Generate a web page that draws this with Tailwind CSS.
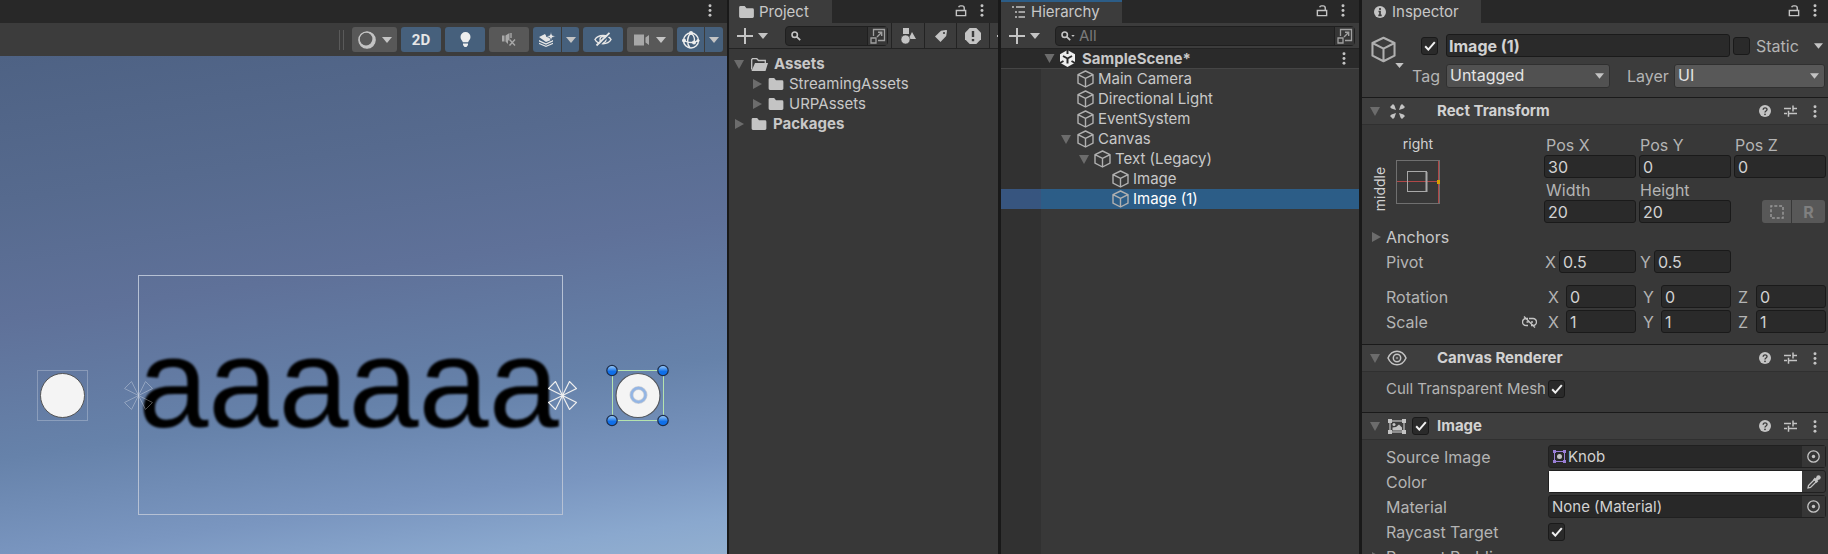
<!DOCTYPE html>
<html lang="en">
<head>
  <meta charset="UTF-8" />
  <meta name="viewport" content="width=device-width, initial-scale=1" />
  <title>SampleScene - Unity Editor</title>
  <script src="https://cdn.jsdelivr.net/npm/@tailwindcss/browser@4"></script>
</head>
<body class="bg-[#191919] font-['Inter',sans-serif] text-[15px] leading-5 text-[#c8c8c8]">

  <!-- Icon sprite -->
  <svg class="hidden" aria-hidden="true">
    <symbol id="dots" viewBox="0 0 4 14"><g fill="#c4c4c4"><circle cx="2" cy="2" r="1.6"/><circle cx="2" cy="7" r="1.6"/><circle cx="2" cy="12" r="1.6"/></g></symbol>
    <symbol id="lock" viewBox="0 0 12 14"><path d="M1 7h10v5.5H1zM9.500 7V4.200A2.300 2.300 0 0 0 7.200 2H5.500A2 2 0 0 0 3.500 3.500" fill="none" stroke="#c4c4c4" stroke-width="1.500"/></symbol>
    <symbol id="caret" viewBox="0 0 10 6"><path d="M0 0h10L5 6z" fill="#c4c4c4"/></symbol>
    <symbol id="fold-open" viewBox="0 0 10 9"><path d="M0 0h10L5 9z" fill="#6c6c6c"/></symbol>
    <symbol id="fold-closed" viewBox="0 0 9 10"><path d="M0 0v10l9-5z" fill="#6c6c6c"/></symbol>
    <symbol id="plus" viewBox="0 0 16 16"><path d="M8 0v16M0 8h16" stroke="#c4c4c4" stroke-width="2"/></symbol>
    <symbol id="folder" viewBox="0 0 16 13"><path d="M0 1.500A1.500 1.500 0 0 1 1.500 0H6l2 2.500h6.500A1.500 1.500 0 0 1 16 4v7.500a1.500 1.500 0 0 1-1.500 1.500h-13A1.500 1.500 0 0 1 0 11.500z" fill="#c4c4c4"/></symbol>
    <symbol id="folder-open" viewBox="0 0 17 13"><path d="M.7 11.500V1.500L1.500.7h4.300L7.500 2.500h6.800V5" fill="none" stroke="#c4c4c4" stroke-width="1.300"/><path d="M4 5h13l-2.500 8H.5z" fill="#c4c4c4"/></symbol>
    <symbol id="search" viewBox="0 0 10 10"><circle cx="3.700" cy="3.700" r="2.700" fill="none" stroke="#c4c4c4" stroke-width="1.600"/><path d="M5.600 5.600 9.200 9.200" stroke="#c4c4c4" stroke-width="1.800"/></symbol>
    <symbol id="popout" viewBox="0 0 16 16"><path d="M3.500 8V1.500h11v11H8" fill="none" stroke="#a0a0a0" stroke-width="1.300"/><path d="M1 10h5v5H1z" fill="none" stroke="#a0a0a0" stroke-width="1.300"/><path d="M7 9 11.500 4.500M8 4.300h3.700V8" fill="none" stroke="#a0a0a0" stroke-width="1.400"/></symbol>
    <symbol id="cube" viewBox="0 0 17 18"><path d="M8.500 1 16 4.600v8.600L8.500 17 1 13.200V4.600zM1 4.600l7.500 3.800L16 4.600M8.500 8.400V17" fill="none" stroke="#b0b0b0" stroke-width="1.400" stroke-linejoin="round"/></symbol>
    <symbol id="help" viewBox="0 0 12 12"><circle cx="6" cy="6" r="6" fill="#c4c4c4"/><path d="M4.200 4.700C4.200 2.300 8 2.300 8 4.600 8 6 6 6 6 7.400" fill="none" stroke="#3e3e3e" stroke-width="1.400"/><circle cx="6" cy="9.300" r=".9" fill="#3e3e3e"/></symbol>
    <symbol id="preset" viewBox="0 0 13 12"><path d="M0 3.500h7M9 3.500h4M9 .5v6M0 8.500h3M5 8.500h8M4.500 5.800v6" stroke="#c4c4c4" stroke-width="1.500"/></symbol>
    <symbol id="check" viewBox="0 0 12 10"><path d="M1.200 5.300 4.300 8.600 10.800 1.200" fill="none" stroke="#f0f0f0" stroke-width="2"/></symbol>
    <symbol id="target" viewBox="0 0 13 13"><circle cx="6.500" cy="6.500" r="5.700" fill="none" stroke="#c4c4c4" stroke-width="1.300"/><circle cx="6.500" cy="6.500" r="1.700" fill="#c4c4c4"/></symbol>
  </svg>

  <div class="flex h-screen gap-[3px] overflow-hidden">

    <!-- Scene view -->
    <section class="-mr-px flex min-w-0 flex-1 flex-col">
      <div class="flex h-[23px] shrink-0 items-center justify-end bg-[#282828] pr-[15px] pb-[3px]">
        <button aria-label="Scene menu"><svg class="h-[13px] w-1"><use href="#dots"/></svg></button>
      </div>
      <div class="flex h-[33px] shrink-0 items-center justify-end gap-1 bg-[#3c3c3c] pr-1">
        <span class="mr-1 h-5 w-[5px] border-x border-[#5a5a5a]"></span>
        <button class="flex h-[25px] w-[45px] items-center justify-center gap-[6px] rounded-[3px] bg-[#585858]" aria-label="Draw mode">
          <svg class="h-[18px] w-[18px]" viewBox="0 0 18 18"><circle cx="9" cy="9" r="8.200" fill="#c4c4c4"/><circle cx="8" cy="8" r="6.400" fill="#585858"/><circle cx="9" cy="9" r="8.200" fill="none" stroke="#c4c4c4" stroke-width="1.200"/></svg>
          <svg class="h-[6px] w-[10px]"><use href="#caret"/></svg>
        </button>
        <button class="h-[25px] w-10 rounded-[3px] bg-[#46607c] font-['Roboto',sans-serif] text-[15px] font-bold text-[#e6e6e6]">2D</button>
        <button class="flex h-[25px] w-10 items-center justify-center rounded-[3px] bg-[#46607c]" aria-label="Lighting">
          <svg class="h-[15px] w-[11px]" viewBox="0 0 11 15"><path d="M5.500 0a5 5 0 0 1 5 5c0 2.500-2 3.500-2.300 5.300H2.800C2.500 8.500.5 7.500.5 5a5 5 0 0 1 5-5zM3 11.500h5v1.500L6.500 15h-2L3 13z" fill="#eee"/></svg>
        </button>
        <button class="flex h-[25px] w-10 items-center justify-center rounded-[3px] bg-[#585858]" aria-label="Audio">
          <svg class="h-[13px] w-[14px]" viewBox="0 0 14 13"><path d="M0 2.500h2.500v6H0zM3.500 2.500 7.500 0v6L6 8v3L3.500 8.500z" fill="#a8a8a8"/><path d="M9 0v5M7.500 6.500l5.500 6M13 6.500l-5.500 6" stroke="#a8a8a8" stroke-width="1.400"/></svg>
        </button>
        <div class="flex gap-px">
          <button class="flex h-[25px] w-7 items-center justify-center rounded-l-[3px] bg-[#46607c]" aria-label="Effects">
            <svg class="h-[15px] w-[17px]" viewBox="0 0 17 15"><path d="M0 5 6 2l1.500 2.500 3 1L12 8l-5 2zM0 8l7 3.200L14 8v1.500l-7 3.200L0 9.500zM0 10.700l7 3 7-3V12l-7 3-7-3z" fill="#e6e6e6"/><path d="M12 0l1.200 3.200 3.500 1.200-3.500 1.200L12 8.800l-1.200-3.200-3.500-1.200 3.500-1.200z" fill="#e6e6e6" stroke="#46607c" stroke-width=".7"/></svg>
          </button>
          <button class="flex h-[25px] w-[17px] items-center justify-center rounded-r-[3px] bg-[#46607c]" aria-label="Effects options"><svg class="h-[6px] w-[10px]"><use href="#caret"/></svg></button>
        </div>
        <button class="flex h-[25px] w-10 items-center justify-center rounded-[3px] bg-[#46607c]" aria-label="Scene visibility">
          <svg class="h-[15px] w-[18px]" viewBox="0 0 18 15"><path d="M1 7.500C4 2 14 2 17 7.500 14 13 4 13 1 7.500z" fill="none" stroke="#e6e6e6" stroke-width="1.500"/><circle cx="9" cy="7.500" r="3" fill="none" stroke="#e6e6e6" stroke-width="1.300"/><path d="M4 14.500 16.500 2" stroke="#46607c" stroke-width="1.500"/><path d="M2.500 13.500 15.500 .8" stroke="#e6e6e6" stroke-width="1.800"/></svg>
        </button>
        <button class="flex h-[25px] w-[46px] items-center justify-center gap-[6px] rounded-[3px] bg-[#585858]" aria-label="Camera">
          <svg class="h-[12px] w-[16px]" viewBox="0 0 16 12"><path d="M0 .5h10v11H0zM11.500 3.500 15 1v10l-3.500-2.500z" fill="#a8a8a8"/></svg>
          <svg class="h-[6px] w-[10px]"><use href="#caret"/></svg>
        </button>
        <div class="flex gap-px">
          <button class="flex h-[25px] w-[27px] items-center justify-center rounded-l-[3px] bg-[#46607c]" aria-label="Gizmos">
            <svg class="h-[18px] w-[18px]" viewBox="0 0 18 18"><g fill="none" stroke="#eee" stroke-width="1.400"><circle cx="9" cy="9.500" r="7.500"/><path d="M9 2C5 5 4.500 13 8 17M9 2c3.500 3 4 7 3 10M2 9.500c3.500 2.500 10.500 3 14 0"/></g><g fill="#eee"><circle cx="9" cy="2" r="2"/><circle cx="2" cy="9.500" r="2"/><circle cx="12" cy="11.500" r="2"/><circle cx="16" cy="9.500" r="1.500"/></g></svg>
          </button>
          <button class="flex h-[25px] w-[18px] items-center justify-center rounded-r-[3px] bg-[#46607c]" aria-label="Gizmo options"><svg class="h-[6px] w-[10px]"><use href="#caret"/></svg></button>
        </div>
      </div>

      <!-- Scene canvas -->
      <div class="relative flex-1 overflow-hidden bg-[linear-gradient(172deg,#4e6284_0%,#566a8e_24%,#5f7199_44%,#6682aa_67%,#7a96c0_84%,#8aa8ce_94%,#92afd0_100%)]">
        <div class="absolute top-[219px] left-[138px] flex h-[240px] w-[425px] items-center justify-center border border-[#b6c1d4] pr-1 pb-[22px]">
          <span class="font-['Liberation_Sans',sans-serif] text-[126px] leading-none text-black blur-[1px]">aaaaaa</span>
        </div>
        <div class="absolute top-[314px] left-[37px] flex h-[51px] w-[51px] items-center justify-center border border-white/25">
          <span class="h-[45px] w-[45px] rounded-full border border-[#555] bg-[#f4f4f4]"></span>
        </div>
        <svg class="absolute top-[325px] left-[124px] h-[29px] w-[29px] opacity-30" viewBox="0 0 29 29"><path d="M14.500 14.500 7.500.5.5 7.500zM14.500 14.500l7-14 7 7zM14.500 14.500l14 7-7 7zM14.500 14.500l-7 14-7-7z" fill="none" stroke="#fff"/></svg>
        <svg class="absolute top-[325px] left-[548px] h-[29px] w-[29px]" viewBox="0 0 29 29"><path d="M14.500 14.500 7.500.5.5 7.500zM14.500 14.500l7-14 7 7zM14.500 14.500l14 7-7 7zM14.500 14.500l-7 14-7-7z" fill="none" stroke="#eee" stroke-width="1.200"/></svg>
        <svg class="absolute top-[308px] left-[606px] h-[63px] w-[63px]" viewBox="0 0 63 63">
          <defs><linearGradient id="handle" x2="0" y2="1"><stop offset=".1" stop-color="#8fc0f4"/><stop offset=".6" stop-color="#0f6fe8"/></linearGradient></defs>
          <rect x="6.500" y="6.500" width="51" height="50" fill="none" stroke="#b5e3ae"/>
          <circle cx="32" cy="31.500" r="22" fill="#f4f4f4" stroke="#55595f" stroke-width="1.200"/>
          <circle cx="32.500" cy="31" r="7" fill="none" stroke="#c9ced6" stroke-width="4"/>
          <circle cx="32.500" cy="31" r="7" fill="none" stroke="#93b5e4" stroke-width="2.500"/>
          <g fill="url(#handle)" stroke="#1d2c48" stroke-width="1.200"><circle cx="6" cy="6.500" r="5.200"/><circle cx="57" cy="6.500" r="5.200"/><circle cx="6" cy="56.500" r="5.200"/><circle cx="57" cy="56.500" r="5.200"/></g>
        </svg>
      </div>
    </section>

    <!-- Project -->
    <section class="flex w-[269px] shrink-0 flex-col bg-[#383838]">
      <div class="flex h-[23px] items-center bg-[#282828]">
        <h2 class="flex h-[23px] w-[103px] items-center gap-[5px] bg-[#3c3c3c] pl-[10px]">
          <svg class="h-3 w-[15px]"><use href="#folder"/></svg>Project
        </h2>
        <button class="ml-auto pb-[3px]" aria-label="Lock"><svg class="h-[13px] w-3"><use href="#lock"/></svg></button>
        <button class="mr-[14px] ml-[13px] pb-[3px]" aria-label="Project menu"><svg class="h-[13px] w-1"><use href="#dots"/></svg></button>
      </div>
      <div class="flex h-[26px] items-center border-b border-[#232323] bg-[#3c3c3c] pl-2">
        <button class="flex items-center gap-[5px]" aria-label="Create"><svg class="h-4 w-4"><use href="#plus"/></svg><svg class="h-[6px] w-[10px]"><use href="#caret"/></svg></button>
        <label class="ml-[17px] flex h-5 w-[103px] items-center rounded-[4px] border border-[#1f1f1f] bg-[#2a2a2a] pl-[5px]">
          <svg class="h-[10px] w-[10px] shrink-0"><use href="#search"/></svg>
          <input type="search" class="min-w-0 flex-1 outline-none" aria-label="Search project" />
          <span class="flex h-full w-5 items-center justify-center border-l border-[#1f1f1f] bg-[#363636]"><svg class="h-4 w-4"><use href="#popout"/></svg></span>
        </label>
        <div class="ml-[3px] flex h-full flex-1 items-center overflow-hidden">
          <button class="flex h-full w-[33px] shrink-0 items-center justify-center border-l border-[#232323]" aria-label="Search by type"><svg class="h-4 w-[15px]" viewBox="0 0 15 16"><path d="M2 0h6v6H2zM11 4l4 7H7.500z" fill="#c4c4c4"/><circle cx="4.500" cy="11.500" r="4.500" fill="#c4c4c4" stroke="#3c3c3c" stroke-width=".6"/></svg></button>
          <button class="flex h-full w-8 shrink-0 items-center justify-center border-l border-[#232323]" aria-label="Search by label"><svg class="h-3 w-3" viewBox="0 0 12 12"><path d="M0 6.500 6 .8 11 0c.6 0 1 .4 1 1l-.8 5L5.500 12z" fill="#c4c4c4"/><circle cx="9" cy="3" r="1.100" fill="#3c3c3c"/></svg></button>
          <button class="flex h-full w-[33px] shrink-0 items-center justify-center border-l border-[#232323]" aria-label="Search by log"><svg class="h-4 w-4" viewBox="0 0 16 16"><path d="M4.700 0h6.600L16 4.700v6.600L11.300 16H4.700L0 11.300V4.700z" fill="#c4c4c4"/><path d="M8 3v6M8 11v2.200" stroke="#3c3c3c" stroke-width="2.400"/></svg></button>
          <span class="flex h-full flex-1 items-center justify-end border-l border-[#232323]"><span class="h-[2px] w-px bg-[#c4c4c4]"></span></span>
        </div>
      </div>
      <ul class="pt-[5px]">
        <li class="flex h-5 items-center pl-[5px] font-bold"><svg class="h-[9px] w-[10px]"><use href="#fold-open"/></svg><svg class="mr-[6px] ml-[7px] h-[13px] w-[17px]"><use href="#folder-open"/></svg>Assets</li>
        <li class="flex h-5 items-center pl-6"><svg class="h-[10px] w-[9px]"><use href="#fold-closed"/></svg><svg class="mr-[5px] ml-[6px] h-3 w-4"><use href="#folder"/></svg>StreamingAssets</li>
        <li class="flex h-5 items-center pl-6"><svg class="h-[10px] w-[9px]"><use href="#fold-closed"/></svg><svg class="mr-[5px] ml-[6px] h-3 w-4"><use href="#folder"/></svg>URPAssets</li>
        <li class="flex h-5 items-center pl-[6px] font-bold"><svg class="h-[10px] w-[9px]"><use href="#fold-closed"/></svg><svg class="mr-[6px] ml-[7px] h-3 w-4"><use href="#folder"/></svg>Packages</li>
      </ul>
    </section>

    <!-- Hierarchy -->
    <section class="flex w-[358px] shrink-0 flex-col bg-[#383838]">
      <div class="flex h-[23px] items-center bg-[#282828]">
        <h2 class="flex h-[23px] w-[121px] items-center gap-[6px] border-t-2 border-[#2c5d87] bg-[#3c3c3c] pb-[1px] pl-[11px]">
          <svg class="h-3 w-[13px]" viewBox="0 0 13 12"><path d="M0 1h2M4 1h9M3 6h2M6.500 6H13M3 11h2M6.500 11H13" stroke="#c4c4c4" stroke-width="1.300"/></svg>Hierarchy
        </h2>
        <button class="ml-auto pb-[3px]" aria-label="Lock"><svg class="h-[13px] w-3"><use href="#lock"/></svg></button>
        <button class="mr-[14px] ml-[13px] pb-[3px]" aria-label="Hierarchy menu"><svg class="h-[13px] w-1"><use href="#dots"/></svg></button>
      </div>
      <div class="flex h-[26px] items-center border-b border-[#232323] bg-[#3c3c3c] pr-1 pl-2">
        <button class="flex items-center gap-[5px]" aria-label="Create"><svg class="h-4 w-4"><use href="#plus"/></svg><svg class="h-[6px] w-[10px]"><use href="#caret"/></svg></button>
        <label class="ml-[15px] flex h-5 flex-1 items-center rounded-[4px] border border-[#1f1f1f] bg-[#2a2a2a] pl-[5px]">
          <svg class="h-[10px] w-[10px] shrink-0"><use href="#search"/></svg><svg class="h-[2px] w-1"><use href="#caret"/></svg>
          <input type="search" placeholder="All" class="ml-1 min-w-0 flex-1 outline-none placeholder:text-[#7a7a7a]" aria-label="Search hierarchy" />
          <span class="flex h-full w-5 items-center justify-center border-l border-[#1f1f1f] bg-[#363636]"><svg class="h-4 w-4"><use href="#popout"/></svg></span>
        </label>
      </div>
      <div class="flex h-5 items-center border-b border-[#454545] bg-[#2a2a2a] pr-[13px] pl-[43px] font-bold">
        <svg class="h-[9px] w-[11px]"><use href="#fold-open"/></svg>
        <svg class="mr-[6px] ml-1 h-[17px] w-[17px]" viewBox="0 0 17 17"><path d="M8.500 0 16 4.200v8.600L8.500 17 1 12.800V4.200z" fill="#eee"/><path d="M8.500 8.500v5M8.500 8.500 4 6M8.500 8.500 13 6" stroke="#2a2a2a" stroke-width="2"/><path d="M8.500 0v4M1 13l3.500-2M16 13l-3.500-2" stroke="#2a2a2a" stroke-width="2"/></svg>
        SampleScene*
        <button class="ml-auto" aria-label="Scene menu"><svg class="h-[13px] w-1"><use href="#dots"/></svg></button>
      </div>
      <ul class="flex-1 bg-linear-to-r from-[#313131] from-[40px] to-[#383838] to-[40px]">
        <li class="flex h-5 items-center gap-1 pl-[76px]"><svg class="h-[18px] w-[17px]"><use href="#cube"/></svg>Main Camera</li>
        <li class="flex h-5 items-center gap-1 pl-[76px]"><svg class="h-[18px] w-[17px]"><use href="#cube"/></svg>Directional Light</li>
        <li class="flex h-5 items-center gap-1 pl-[76px]"><svg class="h-[18px] w-[17px]"><use href="#cube"/></svg>EventSystem</li>
        <li class="flex h-5 items-center gap-1 pl-[60px]"><svg class="mr-[2px] h-[9px] w-[10px]"><use href="#fold-open"/></svg><svg class="h-[18px] w-[17px]"><use href="#cube"/></svg>Canvas</li>
        <li class="flex h-5 items-center gap-1 pl-[78px]"><svg class="mr-px h-[9px] w-[10px]"><use href="#fold-open"/></svg><svg class="h-[18px] w-[17px]"><use href="#cube"/></svg>Text (Legacy)</li>
        <li class="flex h-5 items-center gap-1 pl-[111px]"><svg class="h-[18px] w-[17px]"><use href="#cube"/></svg>Image</li>
        <li class="flex h-5 items-center gap-1 bg-linear-to-r from-[#37557f] from-[40px] to-[#2c5d87] to-[40px] pl-[111px] text-white"><svg class="h-[18px] w-[17px]"><use href="#cube"/></svg>Image (1)</li>
      </ul>
    </section>

    <!-- Inspector -->
    <section class="flex w-[466px] shrink-0 flex-col overflow-hidden bg-[#383838] text-base leading-5">
      <div class="flex h-[23px] shrink-0 items-center bg-[#282828]">
        <h2 class="flex h-[23px] w-[119px] items-center gap-[6px] bg-[#3c3c3c] pl-3 text-[15px]">
          <svg class="h-3 w-3" viewBox="0 0 12 12"><circle cx="6" cy="6" r="6" fill="#c4c4c4"/><path d="M6 2v2M4.500 5.500H6V9M4.300 9.300h3.400" fill="none" stroke="#3c3c3c" stroke-width="1.700"/></svg>Inspector
        </h2>
        <button class="ml-auto pb-[3px]" aria-label="Lock"><svg class="h-[13px] w-3"><use href="#lock"/></svg></button>
        <button class="mr-[11px] ml-[13px] pb-[3px]" aria-label="Inspector menu"><svg class="h-[13px] w-1"><use href="#dots"/></svg></button>
      </div>

      <!-- Object header -->
      <header class="flex h-[74px] shrink-0 bg-[#3c3c3c] pt-[11px] pr-[3px] pl-[9px]">
        <button class="flex w-[37px] flex-col pt-[2px]" aria-label="Object icon">
          <svg class="h-[27px] w-[25px]"><use href="#cube"/></svg>
          <svg class="ml-6 h-[5px] w-[9px]"><use href="#caret"/></svg>
        </button>
        <div class="flex flex-1 flex-col gap-[7px]">
          <div class="flex items-center">
            <span class="ml-[13px] grid h-[18px] w-[17px] place-items-center"><input type="checkbox" checked class="peer col-start-1 row-start-1 h-full w-full appearance-none rounded-[3px] border border-[#1a1a1a] bg-[#2a2a2a]" aria-label="Active" /><svg class="pointer-events-none col-start-1 row-start-1 hidden h-[10px] w-3 peer-checked:block"><use href="#check"/></svg></span>
            <input type="text" value="Image (1)" class="ml-2 h-[23px] min-w-0 flex-1 rounded-[3px] border border-[#1a1a1a] bg-[#2a2a2a] px-[2px] font-bold text-[#d2d2d2]" aria-label="Name" />
            <input type="checkbox" id="static" class="ml-[3px] h-[18px] w-[17px] appearance-none rounded-[3px] border border-[#1a1a1a] bg-[#2a2a2a]" />
            <label for="static" class="ml-[6px] w-[58px] text-[#b4b4b4]">Static</label>
            <svg class="mr-[2px] h-[6px] w-[9px]"><use href="#caret"/></svg>
          </div>
          <div class="flex items-center">
            <label for="tag" class="w-[38px] pl-1 text-[#b4b4b4]">Tag</label>
            <span class="grid h-[23px] w-[164px] items-center"><select id="tag" class="col-start-1 row-start-1 h-full w-full appearance-none rounded-[3px] border border-[#303030] bg-[#515151] px-[3px] pb-[2px] text-[#e4e4e4]"><option>Untagged</option></select><svg class="pointer-events-none col-start-1 row-start-1 mr-[6px] h-[6px] w-[9px] justify-self-end"><use href="#caret"/></svg></span>
            <label for="layer" class="ml-[17px] w-[47px] text-[#b4b4b4]">Layer</label>
            <span class="grid h-[23px] flex-1 items-center"><select id="layer" class="col-start-1 row-start-1 h-full w-full appearance-none rounded-[3px] border border-[#303030] bg-[#585858] px-[3px] pb-[2px] text-[#e4e4e4]"><option>UI</option></select><svg class="pointer-events-none col-start-1 row-start-1 mr-[6px] h-[6px] w-[9px] justify-self-end"><use href="#caret"/></svg></span>
          </div>
        </div>
      </header>

      <!-- Rect Transform -->
      <div class="flex h-7 shrink-0 items-center border-t border-b border-t-[#1a1a1a] border-b-[#303030] bg-[#3e3e3e] pr-[11px] pl-2">
        <svg class="h-[9px] w-[10px]"><use href="#fold-open"/></svg>
        <svg class="ml-[10px] h-[15px] w-[15px]" viewBox="0 0 15 15"><path d="M0 3 3 0 4.500 1.500 6 6 1.500 4.500zM15 3 12 0 10.500 1.500 9 6 13.500 4.500zM0 12 3 15 4.500 13.500 6 9 1.500 10.500zM15 12 12 15 10.500 13.500 9 9 13.500 10.500z" fill="#c4c4c4"/></svg>
        <h3 class="ml-8 flex-1 text-[15px] font-bold text-[#d2d2d2]">Rect Transform</h3>
        <div class="flex items-center gap-[13px]">
          <button aria-label="Help"><svg class="h-3 w-3"><use href="#help"/></svg></button>
          <button aria-label="Presets"><svg class="h-3 w-[13px]"><use href="#preset"/></svg></button>
          <button class="ml-[3px]" aria-label="More"><svg class="h-[13px] w-1"><use href="#dots"/></svg></button>
        </div>
      </div>
      <div class="flex shrink-0 items-start pt-[10px] pr-[2px]">
        <div class="flex w-[182px] pl-2">
          <span class="flex h-[88px] w-5 items-center justify-center pt-5 text-sm leading-5 text-[#d2d2d2]"><span class="-rotate-90">middle</span></span>
          <div class="ml-[6px] flex flex-col items-center text-sm leading-5 text-[#d2d2d2]">
            <span class="-mt-px">right</span>
            <svg class="mt-[6px] h-11 w-11" viewBox="0 0 44 44"><rect x=".5" y=".5" width="43" height="43" fill="none" stroke="#707070"/><path d="M42.500 1v42M1 21.500h42" stroke="#b04848"/><rect x="12" y="12" width="19" height="19" fill="#383838"/><path d="M12 21.500h19" stroke="#b04848"/><rect x="11.500" y="11.500" width="19" height="20" fill="none" stroke="#a8a8a8"/><path d="M30.500 12v20" stroke="#a8a8a8" stroke-width="2"/><path d="M41 20h3v4h-3z" fill="#d8a000"/></svg>
          </div>
        </div>
        <div class="grid flex-1 grid-cols-3 gap-x-[3px]">
          <label for="pos-x" class="pl-[2px] text-[#b4b4b4]">Pos X</label>
          <label for="pos-y" class="pl-px text-[#b4b4b4]">Pos Y</label>
          <label for="pos-z" class="pl-px text-[#b4b4b4]">Pos Z</label>
          <input id="pos-x" type="text" value="30" class="h-[23px] min-w-0 rounded-[3px] border border-[#1a1a1a] bg-[#2a2a2a] px-[3px] text-[#d2d2d2]" />
          <input id="pos-y" type="text" value="0" class="h-[23px] min-w-0 rounded-[3px] border border-[#1a1a1a] bg-[#2a2a2a] px-[3px] text-[#d2d2d2]" />
          <input id="pos-z" type="text" value="0" class="h-[23px] min-w-0 rounded-[3px] border border-[#1a1a1a] bg-[#2a2a2a] px-[3px] text-[#d2d2d2]" />
          <label for="width" class="mt-[2px] pl-[2px] text-[#b4b4b4]">Width</label>
          <label for="height" class="mt-[2px] pl-px text-[#b4b4b4]">Height</label>
          <span></span>
          <input id="width" type="text" value="20" class="h-[23px] min-w-0 rounded-[3px] border border-[#1a1a1a] bg-[#2a2a2a] px-[3px] text-[#d2d2d2]" />
          <input id="height" type="text" value="20" class="h-[23px] min-w-0 rounded-[3px] border border-[#1a1a1a] bg-[#2a2a2a] px-[3px] text-[#d2d2d2]" />
          <div class="flex justify-end gap-px pr-px">
            <button class="flex h-[23px] w-[29px] items-center justify-center rounded-l-[3px] bg-[#585858]" aria-label="Blueprint mode"><svg class="h-[14px] w-[14px]" viewBox="0 0 14 14"><rect x="1" y="1" width="12" height="12" fill="none" stroke="#989898" stroke-width="1.500" stroke-dasharray="3 1.800" stroke-dashoffset="1.500"/></svg></button>
            <button class="h-[23px] w-[33px] rounded-r-[3px] bg-[#585858] font-bold text-[#808080]">R</button>
          </div>
        </div>
      </div>
      <div class="mt-[2px] flex h-[23px] shrink-0 items-center gap-[5px] pl-[10px]"><svg class="h-[10px] w-[9px]"><use href="#fold-closed"/></svg>Anchors</div>
      <div class="mt-[2px] flex h-[23px] shrink-0 items-center pr-[2px] pl-6 text-[#b4b4b4]">
        <span class="w-[158px]">Pivot</span>
        <div class="grid flex-1 grid-cols-3 gap-x-[3px]">
          <label class="flex items-center pl-px"><span class="w-[14px]">X</span><input type="text" value="0.5" class="h-[23px] min-w-0 flex-1 rounded-[3px] border border-[#1a1a1a] bg-[#2a2a2a] px-[3px] text-[#d2d2d2]" /></label>
          <label class="flex items-center pl-px"><span class="w-[14px]">Y</span><input type="text" value="0.5" class="h-[23px] min-w-0 flex-1 rounded-[3px] border border-[#1a1a1a] bg-[#2a2a2a] px-[3px] text-[#d2d2d2]" /></label>
        </div>
      </div>
      <div class="mt-3 flex h-[23px] shrink-0 items-center pr-[2px] pl-6 text-[#b4b4b4]">
        <span class="w-[158px]">Rotation</span>
        <div class="grid flex-1 grid-cols-3 gap-x-[3px]">
          <label class="flex items-center pl-1"><span class="w-[18px]">X</span><input type="text" value="0" class="h-[23px] min-w-0 flex-1 rounded-[3px] border border-[#1a1a1a] bg-[#2a2a2a] px-[3px] text-[#d2d2d2]" /></label>
          <label class="flex items-center pl-1"><span class="w-[18px]">Y</span><input type="text" value="0" class="h-[23px] min-w-0 flex-1 rounded-[3px] border border-[#1a1a1a] bg-[#2a2a2a] px-[3px] text-[#d2d2d2]" /></label>
          <label class="flex items-center pl-1"><span class="w-[18px]">Z</span><input type="text" value="0" class="h-[23px] min-w-0 flex-1 rounded-[3px] border border-[#1a1a1a] bg-[#2a2a2a] px-[3px] text-[#d2d2d2]" /></label>
        </div>
      </div>
      <div class="mt-[2px] flex h-[23px] shrink-0 items-center pr-[2px] pl-6 text-[#b4b4b4]">
        <span class="w-[136px]">Scale</span>
        <button class="w-[22px]" aria-label="Constrain proportions"><svg class="h-3 w-[15px]" viewBox="0 0 15 12"><path d="M6 2.500H4a3 3 0 0 0 0 7h2M7 2.500h4a3 3 0 0 1 0 7H9M4.500 6h2M9 6h2M2 .5l11 11" fill="none" stroke="#c4c4c4" stroke-width="1.400"/></svg></button>
        <div class="grid flex-1 grid-cols-3 gap-x-[3px]">
          <label class="flex items-center pl-1"><span class="w-[18px]">X</span><input type="text" value="1" class="h-[23px] min-w-0 flex-1 rounded-[3px] border border-[#1a1a1a] bg-[#2a2a2a] px-[3px] text-[#d2d2d2]" /></label>
          <label class="flex items-center pl-1"><span class="w-[18px]">Y</span><input type="text" value="1" class="h-[23px] min-w-0 flex-1 rounded-[3px] border border-[#1a1a1a] bg-[#2a2a2a] px-[3px] text-[#d2d2d2]" /></label>
          <label class="flex items-center pl-1"><span class="w-[18px]">Z</span><input type="text" value="1" class="h-[23px] min-w-0 flex-1 rounded-[3px] border border-[#1a1a1a] bg-[#2a2a2a] px-[3px] text-[#d2d2d2]" /></label>
        </div>
      </div>

      <!-- Canvas Renderer -->
      <div class="mt-[11px] flex h-7 shrink-0 items-center border-t border-b border-t-[#1a1a1a] border-b-[#303030] bg-[#3e3e3e] pr-[11px] pl-2">
        <svg class="h-[9px] w-[10px]"><use href="#fold-open"/></svg>
        <svg class="ml-[7px] h-4 w-5" viewBox="0 0 20 16"><path d="M1 8C5 -1 15 -1 19 8 15 17 5 17 1 8z" fill="none" stroke="#c4c4c4" stroke-width="1.500"/><circle cx="10" cy="8" r="3.700" fill="none" stroke="#c4c4c4" stroke-width="1.500"/><circle cx="10" cy="8" r="1.300" fill="#888"/></svg>
        <h3 class="ml-[30px] flex-1 text-[15px] font-bold text-[#d2d2d2]">Canvas Renderer</h3>
        <div class="flex items-center gap-[13px]">
          <button aria-label="Help"><svg class="h-3 w-3"><use href="#help"/></svg></button>
          <button aria-label="Presets"><svg class="h-3 w-[13px]"><use href="#preset"/></svg></button>
          <button class="ml-[3px]" aria-label="More"><svg class="h-[13px] w-1"><use href="#dots"/></svg></button>
        </div>
      </div>
      <div class="mt-[5px] flex h-[23px] shrink-0 items-center pl-6 text-[#b4b4b4]">
        <label for="cull" class="mr-[3px] w-[159px] overflow-hidden text-[15px] whitespace-nowrap">Cull Transparent Mesh</label>
        <span class="grid h-[18px] w-[17px] place-items-center"><input type="checkbox" id="cull" checked class="peer col-start-1 row-start-1 h-full w-full appearance-none rounded-[3px] border border-[#1a1a1a] bg-[#2a2a2a]" /><svg class="pointer-events-none col-start-1 row-start-1 hidden h-[10px] w-3 peer-checked:block"><use href="#check"/></svg></span>
      </div>

      <!-- Image -->
      <div class="mt-3 flex h-7 shrink-0 items-center border-t border-b border-t-[#1a1a1a] border-b-[#303030] bg-[#3e3e3e] pr-[11px] pl-2">
        <svg class="h-[9px] w-[10px]"><use href="#fold-open"/></svg>
        <svg class="ml-2 h-[15px] w-[18px]" viewBox="0 0 18 15"><rect x="2" y="2" width="14" height="11" fill="none" stroke="#c4c4c4" stroke-width="1.200"/><g fill="#c4c4c4"><path d="M0 0h4v4H0zM14 0h4v4h-4zM0 11h4v4H0zM14 11h4v4h-4zM4.500 11.500l0-3L8 8l3-2.500 3 3v3z"/><circle cx="6" cy="5.500" r="1.500"/></g></svg>
        <span class="ml-[6px] grid h-[18px] w-[17px] place-items-center"><input type="checkbox" checked class="peer col-start-1 row-start-1 h-full w-full appearance-none rounded-[3px] border border-[#1a1a1a] bg-[#2a2a2a]" aria-label="Image enabled" /><svg class="pointer-events-none col-start-1 row-start-1 hidden h-[10px] w-3 peer-checked:block"><use href="#check"/></svg></span>
        <h3 class="ml-2 flex-1 text-[15px] font-bold text-[#d2d2d2]">Image</h3>
        <div class="flex items-center gap-[13px]">
          <button aria-label="Help"><svg class="h-3 w-3"><use href="#help"/></svg></button>
          <button aria-label="Presets"><svg class="h-3 w-[13px]"><use href="#preset"/></svg></button>
          <button class="ml-[3px]" aria-label="More"><svg class="h-[13px] w-1"><use href="#dots"/></svg></button>
        </div>
      </div>
      <div class="flex shrink-0 flex-col gap-[2px] pt-[5px] pr-[2px] pl-6 text-[#b4b4b4]">
        <div class="flex h-[23px] items-center">
          <span class="w-[162px]">Source Image</span>
          <button class="flex h-[23px] flex-1 items-center rounded-[3px] border border-[#202020] bg-[#282828] pl-1 text-[15px] text-[#d2d2d2]">
            <svg class="mr-[2px] h-[13px] w-[13px]" viewBox="0 0 13 13"><rect x="1.500" y="1.500" width="10" height="10" fill="none" stroke="#9a7fd6"/><path d="M0 0h3v3H0zM10 0h3v3h-3zM0 10h3v3H0zM10 10h3v3h-3z" fill="#9a7fd6"/><circle cx="6.500" cy="6.500" r="2.500" fill="#c4c4c4"/></svg>
            Knob
            <span class="ml-auto flex h-full w-[23px] items-center justify-center bg-[#363636]"><svg class="h-[13px] w-[13px]"><use href="#target"/></svg></span>
          </button>
        </div>
        <div class="flex h-[23px] items-center">
          <span class="w-[162px]">Color</span>
          <div class="flex h-[23px] flex-1 items-center rounded-[3px] border border-[#202020] bg-[#383838]">
            <button class="h-full flex-1 bg-white" aria-label="Color"></button>
            <button class="flex w-[23px] justify-center" aria-label="Pick color"><svg class="h-[14px] w-[14px]" viewBox="0 0 14 14"><path d="M7.500 4.500 9.500 6.500 3.500 12.500 1 13l.5-2.500z" fill="none" stroke="#c4c4c4" stroke-width="1.300"/><path d="M7 3.500 10.500 7M8.500 5.500l3-3" stroke="#c4c4c4" stroke-width="2.500"/><circle cx="11.500" cy="2.500" r="2.200" fill="#c4c4c4"/></svg></button>
          </div>
        </div>
        <div class="flex h-[23px] items-center">
          <span class="w-[162px]">Material</span>
          <button class="flex h-[23px] flex-1 items-center rounded-[3px] border border-[#202020] bg-[#282828] pl-[3px] text-[15px] text-[#d2d2d2]">
            None (Material)
            <span class="ml-auto flex h-full w-[23px] items-center justify-center bg-[#363636]"><svg class="h-[13px] w-[13px]"><use href="#target"/></svg></span>
          </button>
        </div>
        <div class="flex h-[23px] items-center">
          <label for="raycast" class="w-[162px]">Raycast Target</label>
          <span class="grid h-[18px] w-[17px] place-items-center"><input type="checkbox" id="raycast" checked class="peer col-start-1 row-start-1 h-full w-full appearance-none rounded-[3px] border border-[#1a1a1a] bg-[#2a2a2a]" /><svg class="pointer-events-none col-start-1 row-start-1 hidden h-[10px] w-3 peer-checked:block"><use href="#check"/></svg></span>
        </div>
        <div class="-ml-[14px] flex h-[23px] items-center gap-[5px]"><svg class="h-[10px] w-[9px]"><use href="#fold-closed"/></svg>Raycast Padding</div>
      </div>
    </section>

  </div>
</body>
</html>
